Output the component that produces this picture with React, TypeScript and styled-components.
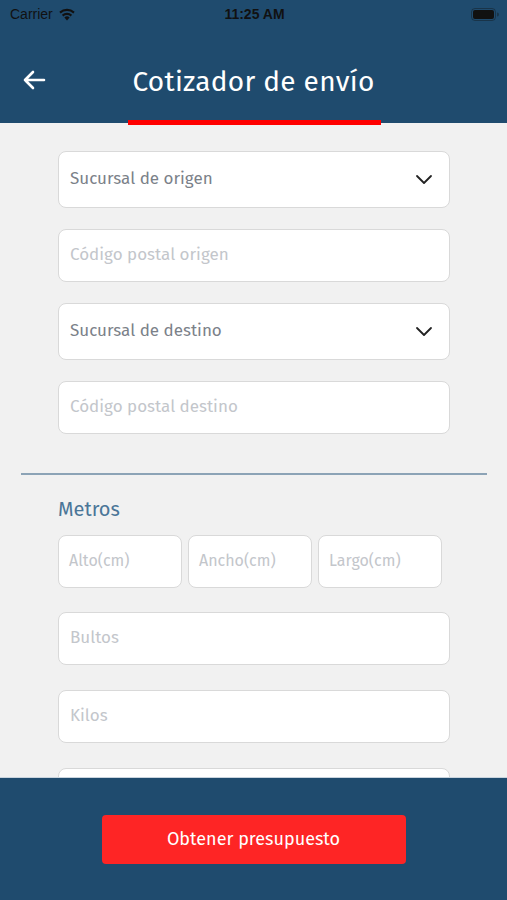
import styled, { createGlobalStyle } from 'styled-components'

const GlobalStyle = createGlobalStyle`
  html, body {
    margin: 0;
    padding: 0;
    height: 100%;
    background: #f1f1f1;
  }
  #root {
    height: 100%;
  }
  * {
    box-sizing: border-box;
  }
`

const Screen = styled.div`
  display: flex;
  flex-flow: column nowrap;
  width: 507px;
  height: 900px;
  overflow: hidden;
  background: #f1f1f1;
  font-family: 'Fira Sans', 'Lato', 'Noto Sans', sans-serif;
`

const Header = styled.header`
  display: flex;
  flex-flow: column nowrap;
  height: 123px;
  flex: 0 0 auto;
  background: #1f4b6e;
  position: relative;
`

const StatusBar = styled.div`
  display: grid;
  grid-template-columns: 1fr auto 1fr;
  align-items: center;
  height: 28px;
  padding: 0 8px 0 10px;
  color: #111;
  font-family: 'Liberation Sans', Arial, sans-serif;
  font-size: 14px;

  .left {
    display: flex;
    align-items: center;
    gap: 5px;
  }
  .time {
    font-weight: bold;
  }
  .right {
    display: flex;
    justify-content: flex-end;
  }
`

const NavBar = styled.div`
  display: flex;
  align-items: center;
  justify-content: center;
  flex: 1 1 auto;
  padding-top: 11px;

  h1 {
    margin: 0;
    color: #fff;
    font-weight: 400;
    font-size: 28px;
    letter-spacing: 0.3px;
  }
`

const BackButton = styled.button`
  position: absolute;
  left: 21px;
  top: 67px;
  border: 0;
  background: none;
  padding: 0;
  display: flex;
`

const Underline = styled.div`
  position: absolute;
  left: 128px;
  bottom: -2px;
  width: 253px;
  height: 5px;
  background: #ff0000;
`

const Body = styled.div`
  flex: 1 1 auto;
  overflow: hidden;
  padding-top: 28px;
`

const Fields = styled.div<{ $gap?: number }>`
  display: flex;
  flex-flow: column nowrap;
  gap: ${(p) => p.$gap ?? 21}px;
  padding: 0 57px 0 58px;
`

const Field = styled.div<{ $tall?: boolean }>`
  display: flex;
  align-items: center;
  justify-content: space-between;
  height: ${(p) => (p.$tall ? 57 : 53)}px;
  flex: 0 0 auto;
  padding: 0 16px 2px 11px;
  background: #fff;
  border: 1px solid #d9d9d9;
  border-radius: 8px;
  font-size: 17px;
  color: ${(p) => (p.$tall ? '#7b8189' : '#c3c6cb')};
`

const Divider = styled.hr`
  margin: 39px 20px 0 21px;
  border: 0;
  border-top: 2px solid #8ca3b6;
`

const SectionTitle = styled.h2`
  margin: 22px 0 14px 58px;
  color: #4b7698;
  font-size: 20px;
  font-weight: 400;
  line-height: 24px;
`

const Row = styled.div`
  display: grid;
  grid-template-columns: repeat(3, 124px);
  gap: 6px;
  margin-bottom: 24px;
`

const SmallField = styled(Field)`
  padding-left: 10px;
  font-size: 16px;
`

const Footer = styled.footer`
  flex: 0 0 auto;
  height: 123px;
  display: flex;
  justify-content: center;
  padding-top: 37px;
  background: #1f4b6e;
  border-top: 1px solid #c9d4de;
`

const SubmitButton = styled.button`
  width: 304px;
  height: 49px;
  border: 0;
  border-radius: 4px;
  background: #fe2525;
  color: #fff;
  font-family: inherit;
  font-size: 18px;
  padding-bottom: 2px;
`

const Chevron = () => (
  <svg width="18" height="12" viewBox="0 0 18 12" fill="none">
    <path d="M2 3l7 7 7-7" stroke="#222" strokeWidth="1.8" strokeLinecap="round" strokeLinejoin="round" />
  </svg>
)

const WifiIcon = () => (
  <svg width="18" height="13" viewBox="0 0 18 13">
    <path d="M9 12.5l2.6-3.1a4 4 0 0 0-5.2 0z" fill="#111" />
    <path d="M3.9 6.8a7.6 7.6 0 0 1 10.2 0l-1.4 1.7a5.4 5.4 0 0 0-7.4 0z" fill="#111" />
    <path d="M1.3 3.7a11.6 11.6 0 0 1 15.4 0l-1.4 1.7a9.4 9.4 0 0 0-12.6 0z" fill="#111" />
  </svg>
)

const Battery = () => (
  <svg width="28" height="13" viewBox="0 0 28 13">
    <rect x="0.5" y="0.5" width="24" height="12" rx="3.5" fill="none" stroke="#111" strokeOpacity="0.4" />
    <rect x="2" y="2" width="21" height="9" rx="2" fill="#111" />
    <path d="M26 4.5v4a2 2 0 0 0 0-4z" fill="#111" fillOpacity="0.4" />
  </svg>
)

const BackArrow = () => (
  <svg width="26" height="26" viewBox="0 0 26 26" fill="none">
    <path d="M23 13H4M12 5l-8 8 8 8" stroke="#fff" strokeWidth="2.6" strokeLinecap="round" strokeLinejoin="round" />
  </svg>
)

const App = () => {
  return (
    <Screen>
      <GlobalStyle />
      <Header>
        <StatusBar>
          <div className='left'>
            <span>Carrier</span>
            <WifiIcon />
          </div>
          <span className='time'>11:25 AM</span>
          <div className='right'>
            <Battery />
          </div>
        </StatusBar>
        <NavBar>
          <h1>Cotizador de envío</h1>
        </NavBar>
        <BackButton aria-label='Volver'>
          <BackArrow />
        </BackButton>
        <Underline />
      </Header>
      <Body>
        <Fields>
          <Field $tall>
            <span>Sucursal de origen</span>
            <Chevron />
          </Field>
          <Field>Código postal origen</Field>
          <Field $tall>
            <span>Sucursal de destino</span>
            <Chevron />
          </Field>
          <Field>Código postal destino</Field>
        </Fields>
        <Divider />
        <SectionTitle>Metros</SectionTitle>
        <Fields>
          <Row>
            <SmallField>Alto(cm)</SmallField>
            <SmallField>Ancho(cm)</SmallField>
            <SmallField>Largo(cm)</SmallField>
          </Row>
        </Fields>
        <Fields $gap={25}>
          <Field>Bultos</Field>
          <Field>Kilos</Field>
          <Field />
        </Fields>
      </Body>
      <Footer>
        <SubmitButton>Obtener presupuesto</SubmitButton>
      </Footer>
    </Screen>
  )
}

export default App
